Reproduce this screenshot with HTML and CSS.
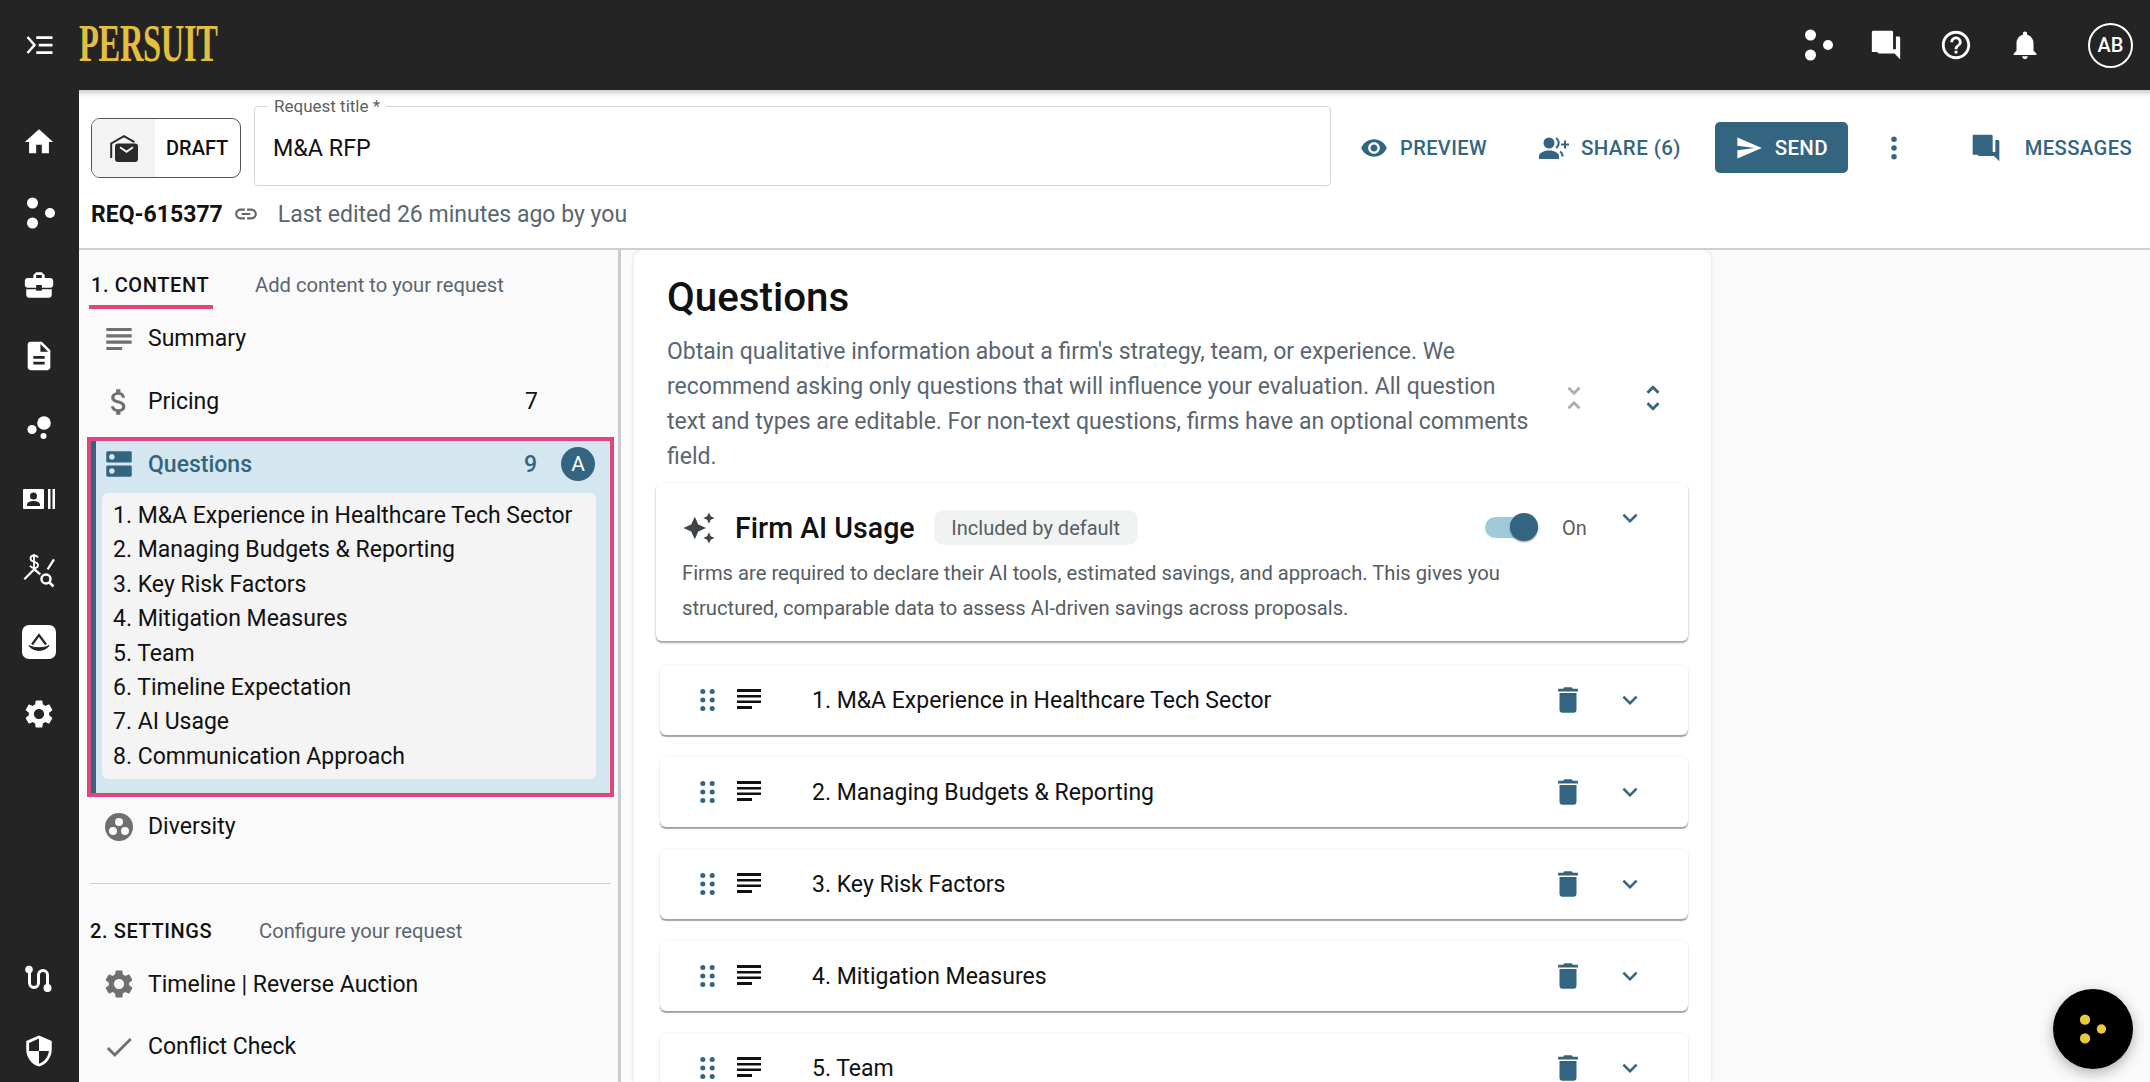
FILE: index.html
```html
<!DOCTYPE html>
<html lang="en">
<head>
<meta charset="utf-8">
<title>Persuit - M&amp;A RFP</title>
<link rel="stylesheet" href="styles.css">
</head>
<body>
<svg class="sprite" aria-hidden="true">
  <defs>
    <symbol id="i-menu" viewBox="0 0 24 24"><path d="M9 5h13v2.2H9zM11 10.9h11v2.2H11zM9 17h13v2.2H9z"/><path d="M2 5.6l5.6 6.4L2 18.4" fill="none" stroke="currentColor" stroke-width="2"/></symbol>
    <symbol id="i-dots" viewBox="0 0 28 32"><circle cx="5.5" cy="6" r="5.5"/><circle cx="5.5" cy="26" r="5.5"/><circle cx="23" cy="16" r="5"/></symbol>
    <symbol id="i-home" viewBox="0 0 24 24"><path d="M10 20v-6h4v6h5v-8h3L12 3 2 12h3v8z"/></symbol>
    <symbol id="i-work" viewBox="0 0 24 24"><path d="M10 16v-1H3.01L3 19c0 1.11.89 2 2 2h14c1.11 0 2-.89 2-2v-4h-7v1h-4zm10-9h-4.01V5l-2-2h-4l-2 2v2H4c-1.1 0-2 .9-2 2v3c0 1.11.89 2 2 2h6v-2h4v2h6c1.1 0 2-.9 2-2V9c0-1.1-.9-2-2-2zm-6 0h-4V5h4v2z"/></symbol>
    <symbol id="i-doc" viewBox="0 0 24 24"><path d="M14 2H6c-1.1 0-1.99.9-1.99 2L4 20c0 1.1.89 2 1.99 2H18c1.1 0 2-.9 2-2V8l-6-6zm2 16H8v-2h8v2zm0-4H8v-2h8v2zm-3-5V3.5L18.5 9H13z"/></symbol>
    <symbol id="i-bubbles" viewBox="0 0 24 23"><circle cx="17" cy="7" r="6.800"/><circle cx="5" cy="13.500" r="4.600"/><circle cx="16.500" cy="20" r="3"/></symbol>
    <symbol id="i-contact" viewBox="0 0 32 20"><path fill-rule="evenodd" d="M1 0h19a1 1 0 0 1 1 1v18a1 1 0 0 1-1 1H1a1 1 0 0 1-1-1V1a1 1 0 0 1 1-1zm9.500 3.500a3.500 3.500 0 1 0 0 7 3.500 3.500 0 0 0 0-7zM4 17h13v-1.500c0-2.500-4-3.500-6.500-3.500S4 13 4 15.500z"/><path d="M25 0h2.500v20H25zM29.500 0H32v20h-2.500z"/></symbol>
    <symbol id="i-chartq" viewBox="0 0 32 34"><path d="M15 3.500c-1-1.500-2.500-2-4-2-2 0-3.500 1-3.500 3s1.500 2.800 3.800 3.300c2.200.5 3.700 1.200 3.700 3.200s-1.700 3-3.800 3c-1.700 0-3.200-.7-4.200-2.200M11 0v16" fill="none" stroke="currentColor" stroke-width="1.800"/><path d="M1.300 25.300l10-10 6 5" fill="none" stroke="currentColor" stroke-width="2.200"/><path d="M24.600 15.300L31 5.300" fill="none" stroke="currentColor" stroke-width="2.200"/><circle cx="23" cy="25" r="4.500" fill="#242424" stroke="currentColor" stroke-width="2.500"/><path d="M26.500 28.500l4 4" stroke="currentColor" stroke-width="2.500"/></symbol>
    <symbol id="i-gear" viewBox="0 0 24 24"><path d="M19.14 12.94c.04-.3.06-.61.06-.94 0-.32-.02-.64-.07-.94l2.03-1.58c.18-.14.23-.41.12-.61l-1.92-3.32c-.12-.22-.37-.29-.59-.22l-2.39.96c-.5-.38-1.03-.7-1.62-.94l-.36-2.54c-.04-.24-.24-.41-.48-.41h-3.84c-.24 0-.43.17-.47.41l-.36 2.54c-.59.24-1.13.57-1.62.94l-2.39-.96c-.22-.08-.47 0-.59.22L2.74 8.87c-.12.21-.08.47.12.61l2.03 1.58c-.05.3-.09.63-.09.94s.02.64.07.94l-2.03 1.58c-.18.14-.23.41-.12.61l1.92 3.32c.12.22.37.29.59.22l2.39-.96c.5.38 1.03.7 1.62.94l.36 2.54c.05.24.24.41.48.41h3.84c.24 0 .44-.17.47-.41l.36-2.54c.59-.24 1.13-.56 1.62-.94l2.39.96c.22.08.47 0 .59-.22l1.92-3.32c.12-.22.07-.47-.12-.61l-2.01-1.58zM12 15.600c-1.980 0-3.600-1.620-3.600-3.600s1.620-3.600 3.600-3.600 3.600 1.620 3.600 3.600-1.620 3.600-3.600 3.600z"/></symbol>
    <symbol id="i-route" viewBox="0 0 28 28"><path d="M4.500 5v13a4.500 4.500 0 0 0 9 0v-8a4.500 4.500 0 0 1 9 0v12" fill="none" stroke="currentColor" stroke-width="3"/><circle cx="4" cy="4.500" r="3.800"/><circle cx="22.500" cy="23" r="4"/></symbol>
    <symbol id="i-shield" viewBox="0 0 24 24"><path d="M12 1L3 5v6c0 5.550 3.840 10.740 9 12 5.160-1.260 9-6.450 9-12V5l-9-4zm0 10.990h7c-.53 4.120-3.280 7.790-7 8.940V12H5V6.300l7-3.110v8.800z"/></symbol>
    <symbol id="i-forum" viewBox="0 0 24 24"><path d="M21 6h-2v9H6v2c0 .55.45 1 1 1h11l4 4V7c0-.55-.45-1-1-1zm-4 6V3c0-.55-.45-1-1-1H3c-.55 0-1 .45-1 1v14h15z"/></symbol>
    <symbol id="i-help" viewBox="0 0 24 24"><path d="M11 18h2v-2h-2v2zm1-16C6.480 2 2 6.480 2 12s4.480 10 10 10 10-4.480 10-10S17.520 2 12 2zm0 18c-4.410 0-8-3.590-8-8s3.590-8 8-8 8 3.590 8 8-3.590 8-8 8zm0-14c-2.210 0-4 1.790-4 4h2c0-1.100.9-2 2-2s2 .9 2 2c0 2-3 1.750-3 5h2c0-2.250 3-2.500 3-5 0-2.210-1.790-4-4-4z"/></symbol>
    <symbol id="i-bell" viewBox="0 0 24 24"><path d="M12 22c1.100 0 2-.9 2-2h-4c0 1.100.89 2 2 2zm6-6v-5c0-3.070-1.640-5.640-4.500-6.320V4c0-.83-.67-1.500-1.500-1.500s-1.500.67-1.500 1.500v.68C7.630 5.360 6 7.920 6 11v5l-2 2v1h16v-1l-2-2z"/></symbol>
    <symbol id="i-eye" viewBox="0 0 24 24"><path d="M12 4.500C7 4.500 2.730 7.610 1 12c1.730 4.390 6 7.500 11 7.500s9.270-3.110 11-7.500c-1.730-4.390-6-7.500-11-7.500zM12 17c-2.760 0-5-2.240-5-5s2.240-5 5-5 5 2.240 5 5-2.240 5-5 5zm0-8c-1.660 0-3 1.340-3 3s1.340 3 3 3 3-1.340 3-3-1.340-3-3-3z"/></symbol>
    <symbol id="i-share" viewBox="0 0 30 22"><circle cx="10" cy="6" r="5.500"/><path d="M0 22v-3c0-3.500 6-5.500 10-5.500s10 2 10 5.500v3z"/><path d="M17 1a6 6 0 0 1 0 10M21 14.500c1.800 1 2.500 2.700 2.500 5" fill="none" stroke="currentColor" stroke-width="2"/><path d="M25 3.500h2v3h3v2h-3v3h-2v-3h-3v-2h3z"/></symbol>
    <symbol id="i-send" viewBox="0 0 24 24"><path d="M2.010 21L23 12 2.010 3 2 10l15 2-15 2z"/></symbol>
    <symbol id="i-more" viewBox="0 0 24 24"><circle cx="12" cy="5" r="2.200"/><circle cx="12" cy="12" r="2.200"/><circle cx="12" cy="19" r="2.200"/></symbol>
    <symbol id="i-drafts" viewBox="0 0 28 27"><path d="M1.200 23V8.500L14 1.200l10.500 6" fill="none" stroke="currentColor" stroke-width="2"/><path fill-rule="evenodd" d="M8 8.500h17a3 3 0 0 1 3 3V24a3 3 0 0 1-3 3H8a3 3 0 0 1-3-3V11.500a3 3 0 0 1 3-3zm1.500 4.500l7 5 7-5-1-1.500-6 4-6-4z"/></symbol>
    <symbol id="i-link" viewBox="0 0 24 24"><path d="M3.900 12c0-1.710 1.390-3.100 3.100-3.100h4V7H7c-2.760 0-5 2.240-5 5s2.240 5 5 5h4v-1.900H7c-1.710 0-3.100-1.390-3.100-3.100zM8 13h8v-2H8v2zm9-6h-4v1.900h4c1.710 0 3.100 1.390 3.100 3.100s-1.390 3.100-3.100 3.100h-4V17h4c2.760 0 5-2.240 5-5s-2.240-5-5-5z"/></symbol>
    <symbol id="i-subject" viewBox="0 0 24 24"><path d="M14 17H4v2h10v-2zm6-8H4v2h16V9zM4 15h16v-2H4v2zM4 5v2h16V5H4z"/></symbol>
    <symbol id="i-money" viewBox="0 0 24 24"><path d="M11.800 10.900c-2.270-.59-3-1.200-3-2.150 0-1.090 1.010-1.850 2.700-1.850 1.780 0 2.440.85 2.500 2.100h2.210c-.07-1.720-1.120-3.300-3.210-3.810V3h-3v2.160c-1.940.42-3.500 1.680-3.500 3.610 0 2.310 1.910 3.460 4.700 4.130 2.500.6 3 1.480 3 2.410 0 .69-.49 1.790-2.700 1.790-2.060 0-2.870-.92-2.980-2.100h-2.200c.12 2.190 1.760 3.420 3.680 3.830V21h3v-2.150c1.950-.37 3.500-1.500 3.500-3.550 0-2.840-2.430-3.810-4.700-4.400z"/></symbol>
    <symbol id="i-dns" viewBox="0 0 24 24"><path d="M20 13H4c-.55 0-1 .45-1 1v6c0 .55.45 1 1 1h16c.55 0 1-.45 1-1v-6c0-.55-.45-1-1-1zM7 19c-1.100 0-2-.9-2-2s.9-2 2-2 2 .9 2 2-.9 2-2 2zM20 3H4c-.55 0-1 .45-1 1v6c0 .55.45 1 1 1h16c.55 0 1-.45 1-1V4c0-.55-.45-1-1-1zM7 9c-1.100 0-2-.9-2-2s.9-2 2-2 2 .9 2 2-.9 2-2 2z"/></symbol>
    <symbol id="i-diversity" viewBox="0 0 28 28"><path fill-rule="evenodd" d="M14 0a14 14 0 1 0 0 28 14 14 0 0 0 0-28zm0 5a4 4 0 1 1 0 8 4 4 0 0 1 0-8zM8 14a4 4 0 1 1 0 8 4 4 0 0 1 0-8zm12 0a4 4 0 1 1 0 8 4 4 0 0 1 0-8z"/></symbol>
    <symbol id="i-check" viewBox="0 0 24 24"><path d="M9 16.170L4.830 12l-1.420 1.410L9 19 21 7l-1.410-1.410z"/></symbol>
    <symbol id="i-less" viewBox="0 0 24 24"><path d="M7.410 18.590L8.830 20 12 16.830 15.170 20l1.410-1.410L12 14l-4.590 4.590zm9.180-13.180L15.170 4 12 7.170 8.830 4 7.410 5.410 12 10l4.590-4.590z"/></symbol>
    <symbol id="i-unfold" viewBox="0 0 24 24"><path d="M12 5.830L15.170 9l1.410-1.410L12 3 7.410 7.590 8.830 9 12 5.830zm0 12.340L8.830 15l-1.410 1.410L12 21l4.590-4.590L15.170 15 12 18.170z"/></symbol>
    <symbol id="i-spark" viewBox="0 0 24 24"><path d="M19 9l1.250-2.750L23 5l-2.750-1.250L19 1l-1.250 2.750L15 5l2.750 1.250L19 9zm-7.500.5L9 4 6.500 9.500 1 12l5.500 2.500L9 20l2.500-5.500L17 12l-5.500-2.500zM19 15l-1.250 2.750L15 19l2.750 1.250L19 23l1.250-2.750L23 19l-2.750-1.250L19 15z"/></symbol>
    <symbol id="i-chev" viewBox="0 0 24 24"><path d="M16.590 8.590L12 13.170 7.410 8.590 6 10l6 6 6-6z"/></symbol>
    <symbol id="i-drag" viewBox="0 0 16 24"><circle cx="3" cy="3" r="2.700"/><circle cx="13" cy="3" r="2.700"/><circle cx="3" cy="12" r="2.700"/><circle cx="13" cy="12" r="2.700"/><circle cx="3" cy="21" r="2.700"/><circle cx="13" cy="21" r="2.700"/></symbol>
    <symbol id="i-lines" viewBox="0 0 24 24"><path d="M0 1h24v3H0zM0 7h24v2.500H0zM0 12.500h24V15H0zM0 18h15v3H0z"/></symbol>
    <symbol id="i-trash" viewBox="0 0 24 24"><path d="M6 19c0 1.100.9 2 2 2h8c1.100 0 2-.9 2-2V7H6v12zM19 4h-3.500l-1-1h-5l-1 1H5v2h14V4z"/></symbol>
  </defs>
</svg>

<header class="topbar">
  <button class="rail-btn menu-btn"><svg class="ico s30"><use href="#i-menu"/></svg></button>
  <div class="logo"><span class="logo-text">PERSUIT</span></div>
  <div class="top-actions">
    <svg class="ico dots-top"><use href="#i-dots"/></svg>
    <svg class="ico forum-top"><use href="#i-forum"/></svg>
    <svg class="ico help-top"><use href="#i-help"/></svg>
    <svg class="ico bell-top"><use href="#i-bell"/></svg>
    <span class="avatar-top">AB</span>
  </div>
</header>

<div class="shell">
  <nav class="rail">
    <div class="rail-main">
      <svg class="ico s34"><use href="#i-home"/></svg>
      <svg class="ico rail-dots"><use href="#i-dots"/></svg>
      <svg class="ico s34"><use href="#i-work"/></svg>
      <svg class="ico s34"><use href="#i-doc"/></svg>
      <svg class="ico rail-bub"><use href="#i-bubbles"/></svg>
      <svg class="ico rail-contact"><use href="#i-contact"/></svg>
      <svg class="ico rail-chart"><use href="#i-chartq"/></svg>
      <span class="rail-tile"><svg viewBox="0 0 34 34" class="tile-glyph"><path d="M10 19.500L17 10l7 9.500" fill="none" stroke="#242424" stroke-width="2.200"/><path d="M7 20.500c4 6.500 16 6.500 20 0-5 3-15 3-20 0z" fill="#242424" stroke="#242424" stroke-width="1"/></svg></span>
      <svg class="ico s34"><use href="#i-gear"/></svg>
    </div>
    <div class="rail-bottom">
      <svg class="ico rail-route"><use href="#i-route"/></svg>
      <svg class="ico s34"><use href="#i-shield"/></svg>
    </div>
  </nav>

  <div class="workspace">
    <section class="req-head">
      <div class="title-row">
        <div class="status-chip">
          <span class="status-icon"><svg class="ico draft-ico"><use href="#i-drafts"/></svg></span>
          <span class="status-text">DRAFT</span>
        </div>
        <fieldset class="title-field">
          <legend>Request title *</legend>
          <span class="title-value">M&amp;A RFP</span>
        </fieldset>
        <div class="req-actions">
          <button class="act act-preview"><svg class="ico s28"><use href="#i-eye"/></svg>PREVIEW</button>
          <button class="act act-share"><svg class="ico share-ico"><use href="#i-share"/></svg>SHARE (6)</button>
          <button class="send-btn"><svg class="ico s28"><use href="#i-send"/></svg>SEND</button>
          <button class="act act-more"><svg class="ico s30"><use href="#i-more"/></svg></button>
          <button class="act act-msg"><svg class="ico s32"><use href="#i-forum"/></svg>MESSAGES</button>
        </div>
      </div>
      <div class="meta-row">
        <strong class="req-id">REQ-615377</strong>
        <svg class="ico link-ico"><use href="#i-link"/></svg>
        <span class="edited">Last edited 26 minutes ago by you</span>
      </div>
    </section>

    <div class="body-row">
      <aside class="sidepanel">
        <div class="section-head first">
          <span class="section-tab">1. CONTENT</span>
          <span class="section-sub">Add content to your request</span>
        </div>
        <div class="nav-item"><svg class="ico nav-ico subj-ico"><use href="#i-subject"/></svg><span class="nav-label">Summary</span></div>
        <div class="nav-item"><svg class="ico nav-ico"><use href="#i-money"/></svg><span class="nav-label">Pricing</span><span class="nav-count">7</span></div>
        <div class="nav-active">
          <div class="nav-active-head">
            <svg class="ico nav-ico"><use href="#i-dns"/></svg>
            <span class="nav-label">Questions</span>
            <span class="nav-count">9</span>
            <span class="nav-badge">A</span>
          </div>
          <ol class="q-list">
            <li>1. M&amp;A Experience in Healthcare Tech Sector</li>
            <li>2. Managing Budgets &amp; Reporting</li>
            <li>3. Key Risk Factors</li>
            <li>4. Mitigation Measures</li>
            <li>5. Team</li>
            <li>6. Timeline Expectation</li>
            <li>7. AI Usage</li>
            <li>8. Communication Approach</li>
          </ol>
        </div>
        <div class="nav-item"><svg class="ico nav-ico div-ico"><use href="#i-diversity"/></svg><span class="nav-label">Diversity</span></div>
        <hr class="side-rule">
        <div class="section-head">
          <span class="section-name">2. SETTINGS</span>
          <span class="section-sub">Configure your request</span>
        </div>
        <div class="nav-item"><svg class="ico nav-ico"><use href="#i-gear"/></svg><span class="nav-label">Timeline | Reverse Auction</span></div>
        <div class="nav-item"><svg class="ico nav-ico"><use href="#i-check"/></svg><span class="nav-label">Conflict Check</span></div>
      </aside>

      <main class="canvas">
        <article class="card">
          <div class="intro">
            <h1>Questions</h1>
            <div class="intro-row">
              <p>Obtain qualitative information about a firm's strategy, team, or experience. We recommend asking only questions that will influence your evaluation. All question text and types are editable. For non-text questions, firms have an optional comments field.</p>
              <div class="intro-tools">
                <svg class="ico s34 tool-off"><use href="#i-less"/></svg>
                <svg class="ico s34 tool-on"><use href="#i-unfold"/></svg>
              </div>
            </div>
          </div>

          <section class="ai-card">
            <div class="ai-head">
              <svg class="ico spark"><use href="#i-spark"/></svg>
              <h2>Firm AI Usage</h2>
              <span class="pill">Included by default</span>
              <span class="toggle"><span class="knob"></span></span>
              <span class="toggle-label">On</span>
              <svg class="ico s30 chev ai-chev"><use href="#i-chev"/></svg>
            </div>
            <p>Firms are required to declare their AI tools, estimated savings, and approach. This gives you structured, comparable data to assess AI-driven savings across proposals.</p>
          </section>

          <div class="q-row"><svg class="ico drag"><use href="#i-drag"/></svg><svg class="ico lines"><use href="#i-lines"/></svg><span class="q-title">1. M&amp;A Experience in Healthcare Tech Sector</span><svg class="ico trash"><use href="#i-trash"/></svg><svg class="ico s30 chev"><use href="#i-chev"/></svg></div>
          <div class="q-row"><svg class="ico drag"><use href="#i-drag"/></svg><svg class="ico lines"><use href="#i-lines"/></svg><span class="q-title">2. Managing Budgets &amp; Reporting</span><svg class="ico trash"><use href="#i-trash"/></svg><svg class="ico s30 chev"><use href="#i-chev"/></svg></div>
          <div class="q-row"><svg class="ico drag"><use href="#i-drag"/></svg><svg class="ico lines"><use href="#i-lines"/></svg><span class="q-title">3. Key Risk Factors</span><svg class="ico trash"><use href="#i-trash"/></svg><svg class="ico s30 chev"><use href="#i-chev"/></svg></div>
          <div class="q-row"><svg class="ico drag"><use href="#i-drag"/></svg><svg class="ico lines"><use href="#i-lines"/></svg><span class="q-title">4. Mitigation Measures</span><svg class="ico trash"><use href="#i-trash"/></svg><svg class="ico s30 chev"><use href="#i-chev"/></svg></div>
          <div class="q-row"><svg class="ico drag"><use href="#i-drag"/></svg><svg class="ico lines"><use href="#i-lines"/></svg><span class="q-title">5. Team</span><svg class="ico trash"><use href="#i-trash"/></svg><svg class="ico s30 chev"><use href="#i-chev"/></svg></div>
        </article>
      </main>
    </div>
  </div>
</div>

<button class="fab"><svg class="fab-dots" viewBox="0 0 28 32"><use href="#i-dots"/></svg></button>
</body>
</html>
```
FILE: styles.css
```css
* { box-sizing: border-box; }
html, body { margin: 0; height: 1082px; overflow: hidden; }
body { font-family: Roboto, "Liberation Sans", sans-serif; color: #111; background: #fafafa; }
button { font-family: inherit; border: 0; background: none; padding: 0; cursor: pointer; }
h1, h2, p, ol { margin: 0; padding: 0; }
.sprite { width: 0; height: 0; position: absolute; }
.ico { display: block; fill: currentColor; flex: none; }
.s28 { width: 28px; height: 28px; }
.s30 { width: 30px; height: 30px; }
.s32 { width: 32px; height: 32px; }
.s34 { width: 34px; height: 34px; }

/* top bar */
.topbar { height: 90px; background: #242424; color: #fff; display: flex; align-items: center; }
.rail-btn { color: #fff; width: 79px; height: 90px; display: flex; align-items: center; justify-content: center; }
.logo { width: 134px; height: 40px; margin-top: -2px; overflow: visible; }
.logo-text { display: inline-block; font-family: "Liberation Serif", serif; font-size: 52px; line-height: 40px; color: #e3bf3d; transform: scaleX(.625); transform-origin: left center; font-weight: 700; letter-spacing: -0.5px; }
.top-actions { margin-left: auto; display: flex; align-items: center; padding-right: 17px; }
.dots-top { width: 28px; height: 32px; }
.forum-top { width: 34px; height: 34px; margin-left: 36px; }
.help-top { width: 34px; height: 34px; margin-left: 36px; }
.bell-top { width: 34px; height: 34px; margin-left: 35px; }
.avatar-top { width: 45px; height: 45px; margin-left: 46px; border: 2px solid #fff; border-radius: 50%; display: flex; align-items: center; justify-content: center; font-size: 20px; font-weight: 500; }

.shell { display: flex; height: 992px; }
.rail { width: 79px; background: #242424; color: #fff; display: flex; flex-direction: column; justify-content: space-between; align-items: center; padding: 16px 1px 14px 0; }
.rail-main { display: grid; grid-auto-rows: 71.5px; justify-items: center; align-items: center; }
.rail-dots { width: 28px; height: 32px; margin-left: 4px; }
.rail-bub { width: 24px; height: 23px; }
.rail-contact { width: 32px; height: 20px; }
.rail-chart { width: 32px; height: 34px; }
.rail-tile { width: 34px; height: 34px; background: #fff; border-radius: 7px; display: flex; align-items: center; justify-content: center; }
.tile-glyph { width: 34px; height: 34px; }
.rail-bottom { display: flex; flex-direction: column; align-items: center; gap: 41px; }
.rail-route { width: 28px; height: 28px; }

.workspace { flex: 1; min-width: 0; display: flex; flex-direction: column; }

/* request header */
.req-head { height: 160px; background: #fff; border-bottom: 2px solid #c9d2d2; box-shadow: inset 0 8px 6px -6px rgba(0,0,0,.28); padding: 0 17px 0 12px; }
.title-row { display: flex; align-items: flex-start; padding-top: 8px; }
.status-chip { margin-top: 20px; width: 150px; height: 60px; border: 1.500px solid #555; border-radius: 9px; display: flex; overflow: hidden; flex: none; }
.status-icon { width: 63px; background: #f3f3f3; display: flex; align-items: center; justify-content: center; color: #2a2a2a; }
.draft-ico { width: 28px; height: 27px; }
.status-text { flex: 1; display: flex; align-items: center; font-size: 20px; font-weight: 500; padding-left: 11px; }
.title-field { margin: 0 0 0 13px; width: 1077px; height: 88px; border: 1.500px solid #d3d6d6; border-radius: 4px; padding: 0 0 0 18px; min-width: 0; flex: none; }
.title-field legend { font-size: 17px; color: #5d5f60; padding: 0 6px; margin-left: -5px; line-height: 17px; }
.title-value { display: block; font-size: 23.300px; line-height: 26px; margin-top: 20px; }
.req-actions { display: flex; align-items: center; height: 57px; margin-top: 21px; margin-left: 29px; flex: none; }
.act { display: flex; align-items: center; color: #336580; font-size: 20px; font-weight: 500; letter-spacing: .4px; white-space: nowrap; flex: none; }
.act-preview svg { margin-right: 12px; }
.act-share { margin-left: 52px; font-size: 20.500px; }
.share-ico { width: 30px; height: 22px; margin-right: 12px; }
.send-btn { margin-left: 34px; width: 133px; height: 51px; border-radius: 5px; background: #336580; color: #fff; display: flex; align-items: center; justify-content: center; gap: 12px; font-size: 20.500px; font-weight: 500; letter-spacing: .3px; flex: none; }
.act-more { margin-left: 31px; }
.act-msg { margin-left: 61px; font-size: 20.200px; }
.act-msg svg { margin-right: 23px; }
.meta-row { display: flex; align-items: center; height: 30px; margin-top: 13px; }
.req-id { font-size: 23px; font-weight: 700; }
.link-ico { width: 26px; height: 26px; margin-left: 10px; color: #666; }
.edited { margin-left: 19px; font-size: 23px; color: #5a6570; }

/* body */
.body-row { flex: 1; display: flex; min-height: 0; }
.sidepanel { width: 542px; border-right: 3px solid #c9cdd2; background: #fafafa; padding: 0 4px 0 8px; flex: none; }
.section-head { display: flex; align-items: center; font-size: 20px; height: 44px; }
.section-head.first { height: 57px; align-items: flex-start; }
.section-tab { font-weight: 500; letter-spacing: .6px; margin-left: 2px; padding: 23px 0 0 2px; line-height: 24px; width: 124px; height: 59px; margin-right: 42px; border-bottom: 4px solid #e0457f; white-space: nowrap; }
.section-name { font-weight: 500; letter-spacing: .6px; padding-left: 3px; width: 172px; white-space: nowrap; }
.section-sub { color: #5a6570; font-size: 20.200px; }
.section-head.first .section-sub { padding-top: 23px; line-height: 24px; }
.nav-item { height: 63px; display: flex; align-items: center; padding: 0 0 0 15px; }
.section-head + .nav-item { height: 62px; }
.first + .nav-item { height: 63px; }
.nav-ico { width: 34px; height: 34px; color: #6f6f6f; margin-right: 12px; }
.subj-ico { width: 38px; height: 38px; margin: 0 10px 0 -2px; }
.div-ico { width: 28px; height: 28px; margin: 0 15px 0 3px; }
.nav-label { font-size: 23px; }
.nav-count { margin-left: auto; width: 89px; font-size: 23px; }
.nav-active { margin: 4px 0 -2px; border: 4px solid #e0457f; background: #d4e6ef; height: 360px; box-shadow: inset 5px 0 0 #336580; padding: 0 14px 0 11px; }
.nav-active-head { height: 46px; margin-bottom: 6px; display: flex; align-items: center; color: #336580; }
.nav-active-head .nav-ico { color: #336580; }
.nav-active-head .nav-label { font-weight: 500; }
.nav-active-head .nav-count { width: auto; font-weight: 500; margin-right: 24px; }
.nav-badge { width: 34px; height: 34px; border-radius: 50%; background: #336580; color: #fff; display: flex; align-items: center; justify-content: center; font-size: 21px; margin-right: 1px; }
.q-list { list-style: none; background: #f4f4f4; border-radius: 6px; height: 286px; padding: 6px 0 0 11px; }
.q-list li { font-size: 23px; line-height: 34.400px; white-space: nowrap; color: #111; }
.side-rule { border: 0; border-top: 1.500px solid #cfcfd6; margin: 25px 3px 25px 3px; }

/* canvas */
.canvas { flex: 1; min-width: 0; padding-left: 13px; background: #fafafa; overflow: hidden; }
.card { width: 1077px; height: 100%; background: #fff; border-radius: 10px 10px 0 0; box-shadow: 0 0 4px rgba(0,0,0,.12); padding: 0 23px 0 22px; }
.intro { padding: 23px 0 0 11px; }
h1 { font-size: 40.300px; line-height: 50px; font-weight: 500; }
.intro-row { display: flex; margin-top: 11px; }
.intro-row p { width: 870px; font-size: 23px; line-height: 35px; color: #5a6570; flex: none; }
.intro-tools { display: flex; gap: 45px; margin: 47px 0 0 20px; height: 34px; }
.tool-off { color: #a9b0b4; }
.tool-on { color: #336580; }

.ai-card { margin-top: 9px; height: 158px; background: #fff; border-radius: 6px; box-shadow: 0 2px 2px rgba(0,0,0,.35), 0 0 3px rgba(0,0,0,.08); padding: 27px 43px 0 26px; }
.ai-head { display: flex; align-items: center; height: 35px; }
.spark { width: 34px; height: 34px; color: #3d4347; }
.ai-head h2 { font-size: 28.600px; font-weight: 500; margin-left: 19px; }
.pill { margin-left: 19px; height: 35px; width: 204px; background: #f1f3f3; border-radius: 10px; display: flex; align-items: center; justify-content: center; font-size: 20px; color: #555d62; }
.toggle { margin-left: auto; position: relative; width: 53px; height: 21px; background: #9fcadb; border-radius: 11px; }
.knob { position: absolute; right: 0; top: -4px; width: 28px; height: 28px; border-radius: 50%; background: #336580; box-shadow: 0 1px 2px rgba(0,0,0,.4); }
.toggle-label { margin-left: 24px; font-size: 20px; color: #555d62; width: 53px; }
.chev { color: #336580; }
.ai-chev { margin-top: -20px; }
.ai-head + p { font-size: 20.200px; line-height: 35px; color: #555d62; margin-top: 11px; width: 860px; }
.q-row { margin: 25px 0 0 4px; height: 70px; background: #fff; border-radius: 6px; box-shadow: 0 2px 1px rgba(0,0,0,.35), 0 0 3px rgba(0,0,0,.08); display: flex; align-items: center; padding: 0 43px 0 40px; }
.ai-card + .q-row { margin-top: 24px; }
.q-row + .q-row { margin-top: 22px; }
.drag { width: 15px; height: 24px; color: #336580; }
.lines { width: 24px; height: 24px; margin-left: 22px; color: #111; }
.q-title { margin-left: 51px; font-size: 23px; }
.trash { margin-left: auto; width: 34px; height: 34px; color: #336580; margin-right: 30px; }

/* floating button */
.fab { position: absolute; left: 2053px; top: 989px; width: 80px; height: 80px; border-radius: 50%; background: #000; box-shadow: 0 4px 14px rgba(0,0,0,.3); display: flex; align-items: center; justify-content: center; }
.fab-dots { width: 30px; height: 30px; fill: #e8c93f; }
```
